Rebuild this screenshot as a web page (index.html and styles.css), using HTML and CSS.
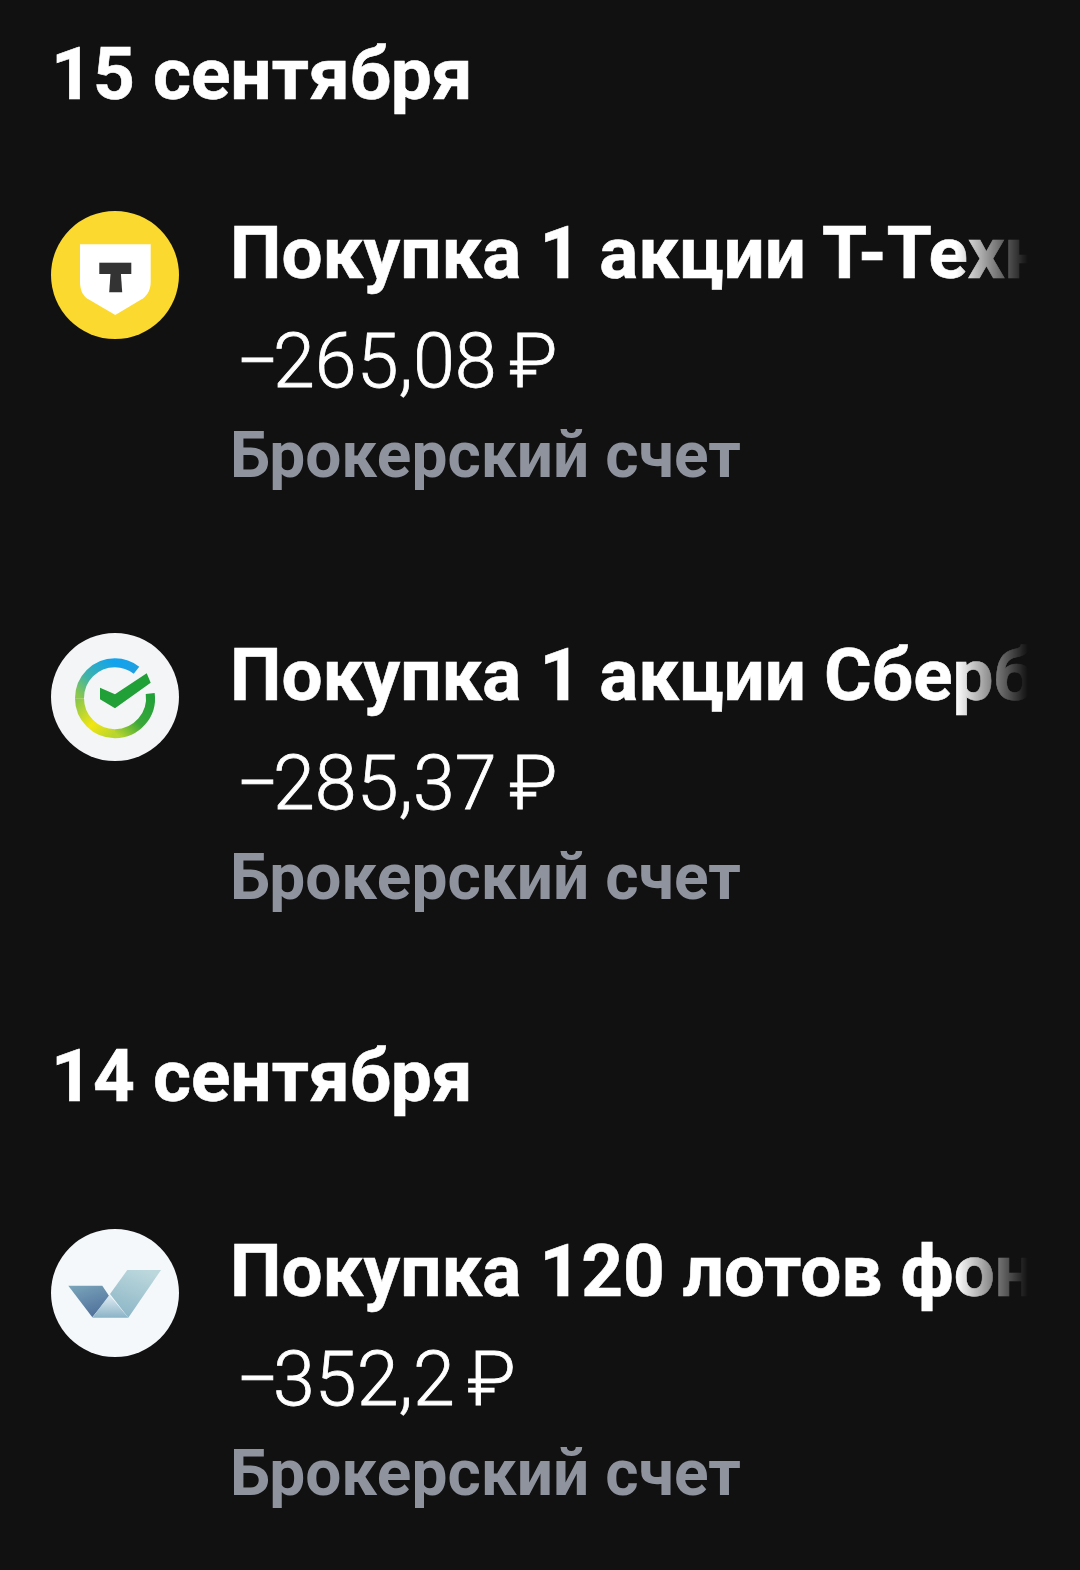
FILE: index.html
```html
<!DOCTYPE html>
<html lang="ru">
<head>
  <meta charset="UTF-8">
  <meta name="viewport" content="width=device-width, initial-scale=1.0">
  <title>Операции</title>
  <link rel="stylesheet" href="styles.css">
</head>
<body>
  <div class="feed">
    <section class="day day-first">
      <h2 class="day-title">15 сентября</h2>

      <div class="operation">
        <svg class="logo" viewBox="0 0 128 128">
          <circle cx="64" cy="64" r="64" fill="#fbd92f"/>
          <path d="M29 33.300H99.700V70.700C99.700 78 97 83 92.300 87.300L64.300 104L35.700 87.300C31 83 29 78 29 70.700Z" fill="#fff"/>
          <rect x="48.300" y="51.700" width="32" height="11.300" fill="#333"/>
          <path d="M59.700 60H69.700L71.200 81.300H58.200Z" fill="#333"/>
        </svg>
        <div class="operation-body">
          <div class="operation-title">Покупка 1 акции Т-Технологии</div>
          <div class="operation-amount"><span class="minus">−</span>265,08&#8201;<span class="currency">₽</span></div>
          <div class="operation-account">Брокерский счет</div>
        </div>
      </div>

      <div class="operation">
        <svg class="logo" viewBox="0 0 128 128">
          <defs>
            <linearGradient id="sb1" gradientUnits="userSpaceOnUse" x1="86" y1="38" x2="64" y2="30">
              <stop offset="0" stop-color="#1f9fe0"/><stop offset="1" stop-color="#12a3ee"/>
            </linearGradient>
            <linearGradient id="sb2" gradientUnits="userSpaceOnUse" x1="64" y1="30" x2="29" y2="65">
              <stop offset="0" stop-color="#12a3ee"/><stop offset="0.6" stop-color="#3fb3a8"/><stop offset="1" stop-color="#8cc84b"/>
            </linearGradient>
            <linearGradient id="sb3" gradientUnits="userSpaceOnUse" x1="29" y1="65" x2="64" y2="100">
              <stop offset="0" stop-color="#8cc84b"/><stop offset="0.55" stop-color="#f2e611"/><stop offset="1" stop-color="#b9d62e"/>
            </linearGradient>
            <linearGradient id="sb4" gradientUnits="userSpaceOnUse" x1="64" y1="100" x2="99" y2="62">
              <stop offset="0" stop-color="#b9d62e"/><stop offset="0.45" stop-color="#3aa83a"/><stop offset="1" stop-color="#21a038"/>
            </linearGradient>
          </defs>
          <circle cx="64" cy="64" r="64" fill="#f3f5f6"/>
          <g fill="none" stroke-width="9">
            <path d="M85.500 37.200A35.500 35.500 0 0 0 64 29.700" stroke="url(#sb1)"/>
            <path d="M64 29.700A35.500 35.500 0 0 0 28.500 65.200" stroke="url(#sb2)"/>
            <path d="M28.500 65.200A35.500 35.500 0 0 0 64 100.700" stroke="url(#sb3)"/>
            <path d="M64 100.700A35.500 35.500 0 0 0 99.200 60.500" stroke="url(#sb4)"/>
          </g>
          <path d="M49 54.700V66.300L64 75.300L99.700 49.700L95.700 40.300L64 61.300Z" fill="#21a038"/>
        </svg>
        <div class="operation-body">
          <div class="operation-title">Покупка 1 акции Сбербанка</div>
          <div class="operation-amount"><span class="minus">−</span>285,37&#8201;<span class="currency">₽</span></div>
          <div class="operation-account">Брокерский счет</div>
        </div>
      </div>
    </section>

    <section class="day">
      <h2 class="day-title">14 сентября</h2>

      <div class="operation">
        <svg class="logo" viewBox="0 0 128 128">
          <defs>
            <linearGradient id="fn1" x1="0" y1="0" x2="0.4" y2="1">
              <stop offset="0" stop-color="#7ba6bb"/><stop offset="1" stop-color="#52739d"/>
            </linearGradient>
            <linearGradient id="fn2" x1="0.7" y1="0" x2="0.3" y2="1">
              <stop offset="0" stop-color="#bcd8dd"/><stop offset="1" stop-color="#8cb6c6"/>
            </linearGradient>
            <linearGradient id="fn3" x1="0" y1="0" x2="0" y2="1">
              <stop offset="0" stop-color="#e2edf4"/><stop offset="1" stop-color="#8ab3c7"/>
            </linearGradient>
          </defs>
          <circle cx="64" cy="64" r="64" fill="#f4f8fa"/>
          <path d="M17.300 56.700H51.300L58.300 67.300L41.300 88.300Z" fill="url(#fn1)"/>
          <path d="M76.300 41H110L77.300 88.700L59 65Z" fill="url(#fn2)"/>
          <path d="M58.300 66L77.300 88.700H41.300Z" fill="url(#fn3)"/>
        </svg>
        <div class="operation-body">
          <div class="operation-title">Покупка 120 лотов фонда</div>
          <div class="operation-amount"><span class="minus">−</span>352,2&#8201;<span class="currency">₽</span></div>
          <div class="operation-account">Брокерский счет</div>
        </div>
      </div>
    </section>
  </div>
</body>
</html>
```

FILE: styles.css
```css
body {
  font-family: Roboto, "Noto Sans", sans-serif;
  background-color: #111112;
  color: #fff;
  margin: 0;
}

.feed {
  padding: 24px 52px 0 51px;
}

.day {
  margin-bottom: 108px;
}

.day-title {
  font-size: 73px;
  font-weight: 700;
  line-height: 100px;
  margin: 0 0 92px;
  -webkit-text-stroke: 0.6px #fff;
}

.day-first .day-title {
  margin-bottom: 76px;
}

.operation {
  display: flex;
  gap: 51px;
  margin-bottom: 126px;
}

.operation:last-child {
  margin-bottom: 0;
}

.logo {
  width: 128px;
  height: 128px;
  flex: none;
  margin-top: 11px;
}

.operation-body {
  flex: 1;
  min-width: 0;
}

.operation-title {
  font-size: 72.8px;
  font-weight: 700;
  line-height: 106px;
  white-space: nowrap;
  overflow: hidden;
  -webkit-text-stroke: 0.6px #fff;
  -webkit-mask-image: linear-gradient(to right, #000 calc(100% - 72px), transparent 100%);
  mask-image: linear-gradient(to right, #000 calc(100% - 72px), transparent 100%);
}

.operation-amount {
  font-size: 75.4px;
  font-weight: 300;
  line-height: 110px;
  padding-left: 6px;
  -webkit-text-stroke: 0.8px #fff;
}

.minus {
  letter-spacing: -6px;
}

.currency {
  margin-left: -3px;
}

.operation-account {
  font-size: 64px;
  font-weight: 700;
  line-height: 80px;
  color: #8f939e;
}
```
